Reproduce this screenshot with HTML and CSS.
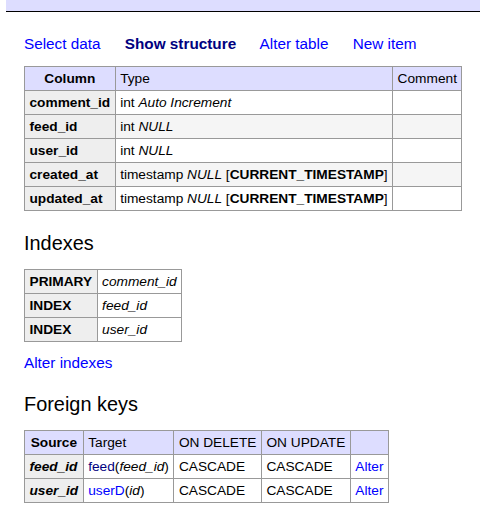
FILE: index.html
```html
<!DOCTYPE html>
<html lang="en">
<head>
    <meta charset="UTF-8">
    <meta name="viewport" content="width=device-width, initial-scale=1.0">
    <title>Table: comments</title>
    <link rel="stylesheet" href="styles.css">
</head>
<body>
    <div id="content">
        <div class="title-bar"></div>

        <p class="links top-links">
            <a href="#">Select data</a>
            <a href="#" class="active">Show structure</a>
            <a href="#">Alter table</a>
            <a href="#">New item</a>
        </p>

        <table class="structure">
            <thead>
                <tr><th>Column</th><td>Type</td><td>Comment</td></tr>
            </thead>
            <tbody>
                <tr><th>comment_id</th><td>int <i>Auto Increment</i></td><td></td></tr>
                <tr class="odd"><th>feed_id</th><td>int <i>NULL</i></td><td></td></tr>
                <tr><th>user_id</th><td>int <i>NULL</i></td><td></td></tr>
                <tr class="odd"><th>created_at</th><td>timestamp <i>NULL</i> [<b>CURRENT_TIMESTAMP</b>]</td><td></td></tr>
                <tr><th>updated_at</th><td>timestamp <i>NULL</i> [<b>CURRENT_TIMESTAMP</b>]</td><td></td></tr>
            </tbody>
        </table>

        <h3>Indexes</h3>
        <table class="indexes">
            <tbody>
                <tr><th>PRIMARY</th><td><i>comment_id</i></td></tr>
                <tr><th>INDEX</th><td><i>feed_id</i></td></tr>
                <tr><th>INDEX</th><td><i>user_id</i></td></tr>
            </tbody>
        </table>
        <p class="links"><a href="#">Alter indexes</a></p>

        <h3>Foreign keys</h3>
        <table class="fkeys">
            <thead>
                <tr><th>Source</th><td>Target</td><td>ON DELETE</td><td>ON UPDATE</td><td></td></tr>
            </thead>
            <tbody>
                <tr><th><i>feed_id</i></th><td><a href="#" class="visited">feed</a>(<i>feed_id</i>)</td><td>CASCADE</td><td>CASCADE</td><td><a href="#">Alter</a></td></tr>
                <tr><th><i>user_id</i></th><td><a href="#">userD</a>(<i>id</i>)</td><td>CASCADE</td><td>CASCADE</td><td><a href="#">Alter</a></td></tr>
            </tbody>
        </table>
    </div>
</body>
</html>
```

FILE: styles.css
```css
body {
    margin: 0;
    font: 15.3px/19px 'Liberation Sans', Arial, sans-serif;
    color: #000;
    background: #fff;
}
#content {
    padding: 0 0 20px 24px;
}
.title-bar {
    height: 11px;
    margin: 0 0 22px -18px;
    background: #ddf;
    border-bottom: 1px solid #000;
}
a {
    color: #00f;
    text-decoration: none;
}
a.visited {
    color: navy;
}
p {
    margin: 11px 0 0;
}
.top-links {
    margin-top: 0;
}
.links a {
    white-space: nowrap;
    margin-right: 20px;
}
.links a.active {
    color: navy;
    font-weight: bold;
}
h3 {
    font-size: 19.9px;
    line-height: 24px;
    font-weight: normal;
    margin: 20px 0 0;
}
table {
    margin: 13px 0 0;
    border-collapse: collapse;
    font-size: 13.7px;
    line-height: 17px;
}
h3 + table {
    margin-top: 14px;
}
td, th {
    border: 1px solid #999;
    padding: 3px 4.5px;
    text-align: left;
    vertical-align: top;
    white-space: nowrap;
}
th {
    background: #eee;
}
thead td, thead th {
    background: #ddf;
}
thead th {
    text-align: center;
}
.odd td {
    background: #f5f5f5;
}
```
